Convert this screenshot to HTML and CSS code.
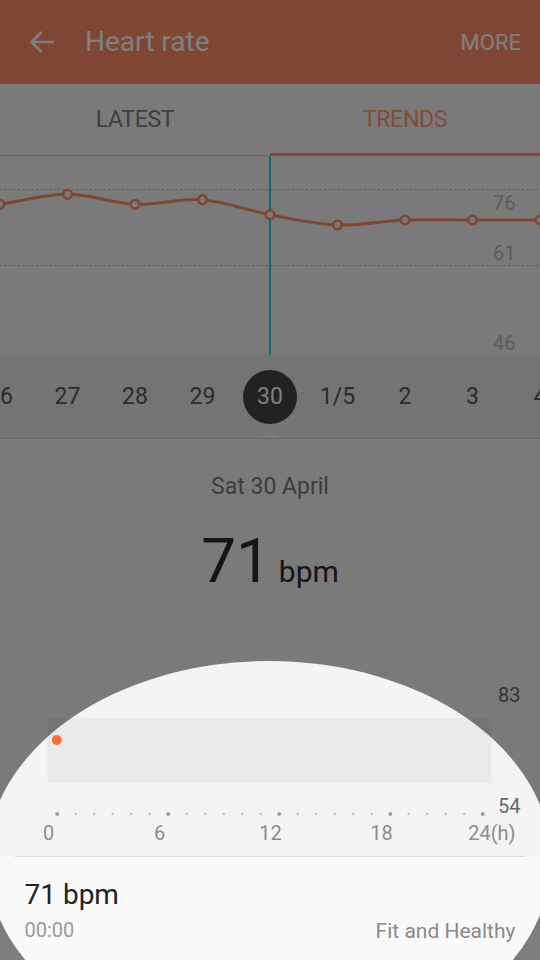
FILE: index.html
```html
<!DOCTYPE html>
<html lang="en">
<head>
<meta charset="utf-8">
<title>Heart rate</title>
<link rel="stylesheet" href="styles.css">
</head>
<body>
<div class="screen">
  <header class="appbar">
    <svg class="back" viewBox="0 0 24 22" width="24" height="22" aria-hidden="true">
      <path d="M1.5 11 H24 M11.5 1 L1.5 11 L11.5 21" fill="none" stroke="#ffffff" stroke-width="2.6"/>
    </svg>
    <div class="title">Heart rate</div>
    <div class="more">MORE</div>
  </header>

  <nav class="tabs">
    <div class="tab">LATEST</div>
    <div class="tab tab-active">TRENDS</div>
  </nav>

  <svg class="trend" viewBox="0 0 540 199" width="540" height="199">
    <line class="grid" x1="0" y1="33.5" x2="540" y2="33.5"/>
    <line class="grid" x1="0" y1="109.5" x2="540" y2="109.5"/>
    <text class="trend-label" x="515.5" y="54">76</text>
    <text class="trend-label" x="515.5" y="103.6">61</text>
    <text class="trend-label" x="515.5" y="193.6">46</text>
    <rect class="cursor" x="269" y="0" width="2" height="199"/>
    <path class="curve" d="M0 48.3 C22.5 44.97 45 38.3 67.5 38.3 C90 38.3 112.5 47.4 135 48.3 C157.5 49.2 180 41.97 202.5 43.7 C225 45.43 247.5 54.48 270 58.7 C292.5 62.92 315 68.12 337.5 69 C360 69.88 382.5 64.83 405 64 C427.5 63.17 450 64 472.5 64 C495 64 517.5 64 540 64"/>
    <circle class="pt" cx="0" cy="48.3" r="4.3"/>
    <circle class="pt" cx="67.5" cy="38.3" r="4.3"/>
    <circle class="pt" cx="135" cy="48.3" r="4.3"/>
    <circle class="pt" cx="202.5" cy="43.7" r="4.3"/>
    <circle class="pt" cx="270" cy="58.7" r="4.3"/>
    <circle class="pt" cx="337.5" cy="69" r="4.3"/>
    <circle class="pt" cx="405" cy="64" r="4.3"/>
    <circle class="pt" cx="472.5" cy="64" r="4.3"/>
    <circle class="pt" cx="540" cy="64" r="4.3"/>
  </svg>

  <div class="days">
    <div class="days-track">
      <span class="day day-first">26</span>
      <span class="day">27</span>
      <span class="day">28</span>
      <span class="day">29</span>
      <span class="day"><span class="day-circle">30</span></span>
      <span class="day">1/5</span>
      <span class="day">2</span>
      <span class="day">3</span>
      <span class="day">4</span>
    </div>
  </div>

  <section class="summary">
    <div class="summary-date">Sat 30 April</div>
    <div class="summary-value">
      <span class="summary-num">71</span>
      <span class="summary-unit">bpm</span>
    </div>
  </section>

  <section class="hourly">
    <svg class="hourly-chart" viewBox="0 0 540 194" width="540" height="194">
      <text class="range-label" x="520.5" y="40">83</text>
      <rect class="band" x="47.5" y="56" width="444" height="65"/>
      <circle class="reading" cx="56.8" cy="78" r="5"/>
      <text class="range-label" x="520.5" y="151.3">54</text>
      <g class="tick-big">
        <circle cx="57.2" cy="152" r="2"/>
        <circle cx="168.2" cy="152" r="2"/>
        <circle cx="279.2" cy="152" r="2"/>
        <circle cx="390.2" cy="152" r="2"/>
        <circle cx="482.7" cy="152" r="2"/>
      </g>
      <g class="tick-small">
        <circle cx="75.7" cy="152" r="1.3"/>
        <circle cx="94.2" cy="152" r="1.3"/>
        <circle cx="112.7" cy="152" r="1.3"/>
        <circle cx="131.2" cy="152" r="1.3"/>
        <circle cx="149.7" cy="152" r="1.3"/>
        <circle cx="186.7" cy="152" r="1.3"/>
        <circle cx="205.2" cy="152" r="1.3"/>
        <circle cx="223.7" cy="152" r="1.3"/>
        <circle cx="242.2" cy="152" r="1.3"/>
        <circle cx="260.7" cy="152" r="1.3"/>
        <circle cx="297.7" cy="152" r="1.3"/>
        <circle cx="316.2" cy="152" r="1.3"/>
        <circle cx="334.7" cy="152" r="1.3"/>
        <circle cx="353.2" cy="152" r="1.3"/>
        <circle cx="371.7" cy="152" r="1.3"/>
        <circle cx="408.7" cy="152" r="1.3"/>
        <circle cx="427.2" cy="152" r="1.3"/>
        <circle cx="445.7" cy="152" r="1.3"/>
        <circle cx="464.2" cy="152" r="1.3"/>
      </g>
      <text class="hour-label" x="48.5" y="178">0</text>
      <text class="hour-label" x="159.5" y="178">6</text>
      <text class="hour-label" x="270.5" y="178">12</text>
      <text class="hour-label" x="381.5" y="178">18</text>
      <text class="hour-label hour-last" x="515.5" y="178">24(h)</text>
    </svg>
  </section>

  <section class="entry">
    <div class="divider"></div>
    <div class="entry-row">
      <div class="entry-left">
        <div class="entry-main">71 bpm</div>
        <div class="entry-time">00:00</div>
      </div>
      <div class="entry-status">Fit and Healthy</div>
    </div>
  </section>

  <div class="spotlight"></div>
</div>
</body>
</html>
```

FILE: styles.css
```css
* {
  box-sizing: border-box;
  margin: 0;
  padding: 0;
}

html,
body {
  width: 540px;
  height: 960px;
  overflow: hidden;
}

body {
  font-family: Roboto, "Noto Sans", sans-serif;
  background: #f5f5f5;
}

.screen {
  position: relative;
  width: 540px;
  height: 960px;
  overflow: hidden;
  display: flex;
  flex-direction: column;
  background: #f5f5f5;
}

/* App bar */
.appbar {
  flex: none;
  height: 84px;
  background: #ff8e66;
  display: flex;
  align-items: center;
  padding: 0 19px 0 30px;
  color: #ffffff;
}

.back {
  flex: none;
  display: block;
}

.title {
  flex: 1;
  margin-left: 31px;
  font-size: 28px;
  line-height: 32px;
}

.more {
  font-size: 22px;
  line-height: 24px;
  padding-top: 2px;
}

/* Tabs */
.tabs {
  flex: none;
  height: 72px;
  display: flex;
}

.tab {
  flex: 1;
  display: flex;
  align-items: center;
  justify-content: center;
  font-size: 23px;
  letter-spacing: -0.3px;
  color: #7e7e7e;
  border-bottom: 1px solid #cccccc;
}

.tab-active {
  color: #ff9a70;
  border-bottom: 3px solid #ff8e66;
  padding-top: 2px;
}

/* Trend chart */
.trend {
  flex: none;
  display: block;
}

.grid {
  stroke: #b4b4b4;
  stroke-width: 1;
  stroke-dasharray: 2 2.5;
}

.trend-label {
  font-family: Roboto, "Noto Sans", sans-serif;
  font-size: 20px;
  fill: #b8b8b8;
  text-anchor: end;
}

.cursor {
  fill: #18d8e2;
}

.curve {
  fill: none;
  stroke: #ff8e64;
  stroke-width: 3;
}

.pt {
  fill: #f5f5f5;
  stroke: #ff8e64;
  stroke-width: 2.6;
}

/* Day strip */
.days {
  flex: none;
  position: relative;
  height: 84px;
  background: #e8e8e8;
  border-bottom: 1px solid #d6d6d6;
}

.days::after {
  content: "";
  position: absolute;
  left: 50%;
  bottom: 0;
  margin-left: -9px;
  border-left: 9px solid transparent;
  border-right: 9px solid transparent;
  border-bottom: 8px solid #f5f5f5;
}

.days-track {
  height: 83px;
  display: flex;
  align-items: center;
  overflow: hidden;
}

.day {
  flex: none;
  width: 67.5px;
  display: flex;
  align-items: center;
  justify-content: center;
  font-size: 23px;
  color: #565656;
}

.day-first {
  margin-left: -33.75px;
}

.day-circle {
  width: 54px;
  height: 54px;
  border-radius: 50%;
  background: #444444;
  color: #ffffff;
  display: flex;
  align-items: center;
  justify-content: center;
}

/* Summary */
.summary {
  flex: none;
  height: 223px;
  padding-top: 34px;
  text-align: center;
}

.summary-date {
  font-size: 23px;
  line-height: 28px;
  color: #787878;
}

.summary-value {
  margin-top: 23.6px;
  display: flex;
  justify-content: center;
  align-items: baseline;
  color: #2c2c2c;
}

.summary-num {
  font-size: 62px;
  line-height: 72px;
}

.summary-unit {
  font-size: 30px;
  line-height: 36px;
  margin-left: 8px;
}

/* Hourly chart */
.hourly {
  flex: none;
  height: 194px;
  background: #f4f4f4;
}

.hourly-chart {
  display: block;
}

.range-label {
  font-family: Roboto, "Noto Sans", sans-serif;
  font-size: 20px;
  fill: #686868;
  text-anchor: end;
}

.band {
  fill: #eaeaea;
}

.reading {
  fill: #ff6d40;
}

.tick-big {
  fill: #9e9e9e;
}

.tick-small {
  fill: #c2c2c2;
}

.hour-label {
  font-family: Roboto, "Noto Sans", sans-serif;
  font-size: 20px;
  fill: #8c8c8c;
  text-anchor: middle;
}

.hour-last {
  text-anchor: end;
}

/* Entry */
.entry {
  flex: 1;
  background: #fafafa;
}

.divider {
  height: 1px;
  margin: 0 15px;
  background: #dcdcdc;
}

.entry-row {
  display: flex;
  justify-content: space-between;
  align-items: flex-end;
  padding: 22px 24.5px 0 24.5px;
}

.entry-main {
  font-size: 28px;
  line-height: 32px;
  color: #222222;
}

.entry-time {
  margin-top: 6.5px;
  font-size: 20px;
  line-height: 24px;
  color: #9a9a9a;
}

.entry-status {
  font-size: 21px;
  line-height: 24px;
  color: #8a8a8a;
  margin-bottom: -1px;
}

/* Spotlight overlay */
.spotlight {
  position: absolute;
  left: -13.5px;
  top: 661px;
  width: 564px;
  height: 398px;
  border-radius: 50%;
  box-shadow: 0 0 0 1500px rgba(0, 0, 0, 0.5);
  pointer-events: none;
}
```
